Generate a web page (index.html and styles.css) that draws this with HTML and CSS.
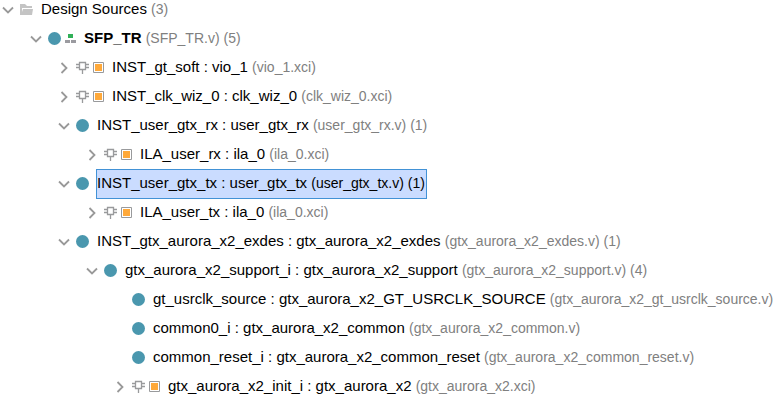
FILE: index.html
```
<!DOCTYPE html>
<html lang="en">
<head>
  <meta charset="UTF-8">
  <meta name="viewport" content="width=device-width, initial-scale=1.0">
  <title>Design Sources</title>
  <link rel="stylesheet" href="styles.css">
</head>
<body>
  <svg class="sprite" aria-hidden="true">
    <symbol id="chevron" viewBox="0 0 16 16">
      <path d="M3 5.5l5 5 5-5" fill="none" stroke="#999" stroke-width="1.8"/>
    </symbol>
    <symbol id="folder" viewBox="0 0 13 13">
      <path d="M0 12V1h5l2 2h5v2H2v7z" fill="#c4c4c4"/>
      <path d="M1 12l2-6h10l-1 6z" fill="#c4c4c4"/>
    </symbol>
    <symbol id="module" viewBox="0 0 13 13">
      <circle cx="6.5" cy="6.5" r="6.5" fill="#4a97ae"/>
    </symbol>
    <symbol id="top" viewBox="0 0 11 11">
      <path d="M3 1h5v4H3z" fill="#31b058"/>
      <path d="M0 7h5v3H0zM6 7h5v3H6z" fill="#9b9ba0"/>
    </symbol>
    <symbol id="pin" viewBox="0 0 13 13">
      <path d="M3.5 1.5h6v7h-6zM0 3.5h3M0 6.5h3M10 3.5h3M10 6.5h3M6.5 9v4" fill="none" stroke="#999a9c" stroke-width="1.3"/>
    </symbol>
    <symbol id="ip" viewBox="0 0 11 11">
      <path d="M0.5 0.5h10v10H0.5z" fill="#fff" stroke="#999a9c"/>
      <path d="M2 2h7v7H2z" fill="#ffa93a"/>
    </symbol>
  </svg>

  <ul class="tree">
    <li>
      <div class="row">
        <button class="toggle open" aria-label="Toggle"><svg><use href="#chevron"/></svg></button>
        <svg class="icon"><use href="#folder"/></svg>
        <span class="label">Design Sources <span class="file">(3)</span></span>
      </div>
      <ul>
        <li>
          <div class="row">
            <button class="toggle open" aria-label="Toggle"><svg><use href="#chevron"/></svg></button>
            <svg class="icon"><use href="#module"/></svg>
            <svg class="icon small"><use href="#top"/></svg>
            <span class="label"><b>SFP_TR</b> <span class="file">(SFP_TR.v) (5)</span></span>
          </div>
          <ul>
            <li>
              <div class="row">
                <button class="toggle" aria-label="Toggle"><svg><use href="#chevron"/></svg></button>
                <svg class="icon"><use href="#pin"/></svg>
                <svg class="icon small"><use href="#ip"/></svg>
                <span class="label">INST_gt_soft : vio_1 <span class="file">(vio_1.xci)</span></span>
              </div>
            </li>
            <li>
              <div class="row">
                <button class="toggle" aria-label="Toggle"><svg><use href="#chevron"/></svg></button>
                <svg class="icon"><use href="#pin"/></svg>
                <svg class="icon small"><use href="#ip"/></svg>
                <span class="label">INST_clk_wiz_0 : clk_wiz_0 <span class="file">(clk_wiz_0.xci)</span></span>
              </div>
            </li>
            <li>
              <div class="row">
                <button class="toggle open" aria-label="Toggle"><svg><use href="#chevron"/></svg></button>
                <svg class="icon"><use href="#module"/></svg>
                <span class="label">INST_user_gtx_rx : user_gtx_rx <span class="file">(user_gtx_rx.v) (1)</span></span>
              </div>
              <ul>
                <li>
                  <div class="row">
                    <button class="toggle" aria-label="Toggle"><svg><use href="#chevron"/></svg></button>
                    <svg class="icon"><use href="#pin"/></svg>
                    <svg class="icon small"><use href="#ip"/></svg>
                    <span class="label">ILA_user_rx : ila_0 <span class="file">(ila_0.xci)</span></span>
                  </div>
                </li>
              </ul>
            </li>
            <li>
              <div class="row">
                <button class="toggle open" aria-label="Toggle"><svg><use href="#chevron"/></svg></button>
                <svg class="icon"><use href="#module"/></svg>
                <span class="label selected">INST_user_gtx_tx : user_gtx_tx <span class="file">(user_gtx_tx.v) (1)</span></span>
              </div>
              <ul>
                <li>
                  <div class="row">
                    <button class="toggle" aria-label="Toggle"><svg><use href="#chevron"/></svg></button>
                    <svg class="icon"><use href="#pin"/></svg>
                    <svg class="icon small"><use href="#ip"/></svg>
                    <span class="label">ILA_user_tx : ila_0 <span class="file">(ila_0.xci)</span></span>
                  </div>
                </li>
              </ul>
            </li>
            <li>
              <div class="row">
                <button class="toggle open" aria-label="Toggle"><svg><use href="#chevron"/></svg></button>
                <svg class="icon"><use href="#module"/></svg>
                <span class="label">INST_gtx_aurora_x2_exdes : gtx_aurora_x2_exdes <span class="file">(gtx_aurora_x2_exdes.v) (1)</span></span>
              </div>
              <ul>
                <li>
                  <div class="row">
                    <button class="toggle open" aria-label="Toggle"><svg><use href="#chevron"/></svg></button>
                    <svg class="icon"><use href="#module"/></svg>
                    <span class="label">gtx_aurora_x2_support_i : gtx_aurora_x2_support <span class="file">(gtx_aurora_x2_support.v) (4)</span></span>
                  </div>
                  <ul>
                    <li>
                      <div class="row leaf">
                        <svg class="icon"><use href="#module"/></svg>
                        <span class="label">gt_usrclk_source : gtx_aurora_x2_GT_USRCLK_SOURCE <span class="file">(gtx_aurora_x2_gt_usrclk_source.v)</span></span>
                      </div>
                    </li>
                    <li>
                      <div class="row leaf">
                        <svg class="icon"><use href="#module"/></svg>
                        <span class="label">common0_i : gtx_aurora_x2_common <span class="file">(gtx_aurora_x2_common.v)</span></span>
                      </div>
                    </li>
                    <li>
                      <div class="row leaf">
                        <svg class="icon"><use href="#module"/></svg>
                        <span class="label">common_reset_i : gtx_aurora_x2_common_reset <span class="file">(gtx_aurora_x2_common_reset.v)</span></span>
                      </div>
                    </li>
                    <li>
                      <div class="row">
                        <button class="toggle" aria-label="Toggle"><svg><use href="#chevron"/></svg></button>
                        <svg class="icon"><use href="#pin"/></svg>
                        <svg class="icon small"><use href="#ip"/></svg>
                        <span class="label">gtx_aurora_x2_init_i : gtx_aurora_x2 <span class="file">(gtx_aurora_x2.xci)</span></span>
                      </div>
                    </li>
                  </ul>
                </li>
              </ul>
            </li>
          </ul>
        </li>
      </ul>
    </li>
  </ul>

  <script>
    document.querySelectorAll('.toggle').forEach(btn => {
      btn.addEventListener('click', () => {
        const open = btn.classList.toggle('open');
        const children = btn.parentElement.nextElementSibling;
        if (children) children.hidden = !open;
      });
    });

    document.querySelectorAll('.label').forEach(label => {
      label.addEventListener('click', () => {
        document.querySelector('.selected').classList.remove('selected');
        label.classList.add('selected');
      });
    });
  </script>
</body>
</html>
```
FILE: styles.css
```
body {
  margin: 0;
  background: #fff;
  color: #000;
  font-family: "Liberation Sans", Arial, sans-serif;
  font-size: 15px;
}
.sprite {
  display: none;
}
ul {
  list-style: none;
  margin: 0;
  padding: 0 0 0 28px;
}
.tree {
  margin-top: -5px;
  padding-left: 0;
}
.row {
  display: flex;
  align-items: center;
  height: 29px;
  white-space: nowrap;
}
.leaf {
  padding-left: 16px;
}
.toggle {
  width: 16px;
  height: 16px;
  padding: 0;
  border: none;
  background: none;
  cursor: pointer;
}
.toggle svg {
  display: block;
  width: 16px;
  height: 16px;
  transform: rotate(-90deg);
}
.toggle.open svg {
  transform: none;
}
.icon {
  flex: none;
  width: 13px;
  height: 13px;
  margin-left: 4px;
}
.icon.small {
  width: 11px;
  height: 11px;
}
.label {
  margin-left: 7px;
  padding: 0 2px 2px 1px;
  line-height: 27px;
  cursor: default;
}
.file {
  color: #808080;
  font-size: 14px;
}
.selected {
  background: #cadcff;
  box-shadow: inset 0 0 0 1px #4292d6;
}
.selected .file {
  color: #000;
}
```
